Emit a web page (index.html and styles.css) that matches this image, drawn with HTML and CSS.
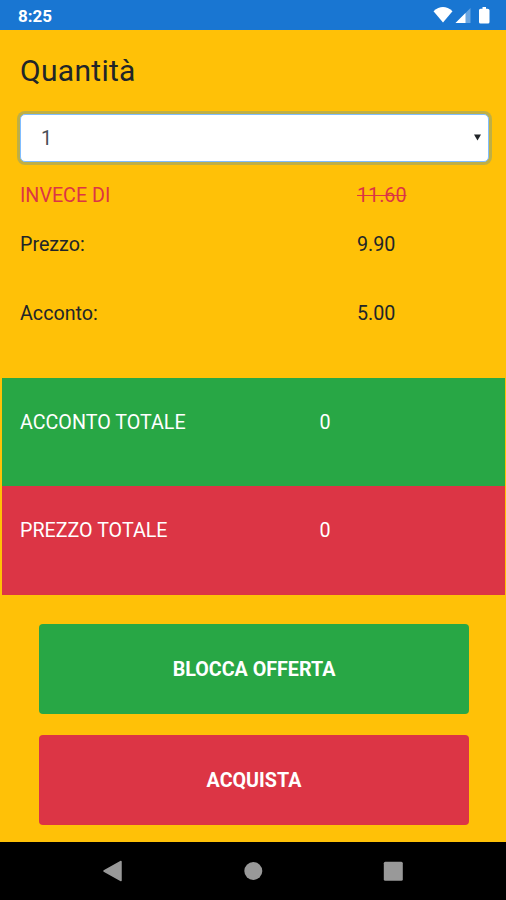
FILE: index.html
```
<!DOCTYPE html>
<html lang="it">
<head>
    <meta charset="UTF-8">
    <meta name="viewport" content="width=device-width, initial-scale=1.0">
    <title>Quantità</title>
    <link rel="stylesheet" href="styles.css">
</head>
<body>
    <header class="status-bar">
        <span class="clock">8:25</span>
        <svg class="status-icons" width="58" height="20" viewBox="0 0 58 20">
            <path d="M0.500 4.200Q10 -4 19.500 4.200L10 15.500Z" fill="#fff"/>
            <path d="M37.500 1V16H22.500Z" fill="#fff" fill-opacity="0.35"/>
            <path d="M32.500 6V16H22.500Z" fill="#fff"/>
            <path d="M48.500 1.800H49.500V0H53V1.800H54.500Q56.500 1.800 56.500 3.300V15Q56.500 16.500 55 16.500H47.500Q46 16.500 46 15V3.300Q46 1.800 47.500 1.800Z" fill="#fff"/>
        </svg>
    </header>

    <main>
        <form class="quantity">
            <h1><label for="qty">Quantità</label></h1>
            <div class="select-box">
                <select id="qty">
                    <option>1</option>
                    <option>2</option>
                    <option>3</option>
                </select>
                <svg class="arrow" width="7" height="7" viewBox="0 0 7 7">
                    <path d="M0 0.500H7L3.500 6.500Z" fill="#212529"/>
                </svg>
            </div>
        </form>

        <div class="prices">
            <div class="row old-price">
                <span>INVECE DI</span>
                <s>11.60</s>
            </div>
            <div class="row price">
                <span>Prezzo:</span>
                <span>9.90</span>
            </div>
            <div class="row deposit">
                <span>Acconto:</span>
                <span>5.00</span>
            </div>
        </div>

        <div class="totals">
            <div class="total green">
                <span>ACCONTO TOTALE</span>
                <span>0</span>
            </div>
            <div class="total red">
                <span>PREZZO TOTALE</span>
                <span>0</span>
            </div>
        </div>

        <div class="actions">
            <button type="button" class="green">BLOCCA OFFERTA</button>
            <button type="button" class="red">ACQUISTA</button>
        </div>
    </main>

    <nav class="nav-bar">
        <svg width="20" height="22" viewBox="0 0 20 22">
            <path d="M1 11L18 1.500V20.500Z" fill="#999" stroke="#999" stroke-width="1.500" stroke-linejoin="round"/>
        </svg>
        <svg width="20" height="22" viewBox="0 0 20 22">
            <circle cx="10.300" cy="11" r="9" fill="#999"/>
        </svg>
        <svg width="20" height="22" viewBox="0 0 20 22">
            <rect x="0.800" y="1.700" width="19" height="19" rx="1.500" fill="#999"/>
        </svg>
    </nav>
</body>
</html>
```
FILE: styles.css
```
* {
    box-sizing: border-box;
}
body {
    margin: 0;
    height: 900px;
    display: flex;
    flex-direction: column;
    background-color: #ffc107;
    color: #212529;
    font-family: Roboto, sans-serif;
    font-size: 19.7px;
    line-height: 30px;
}
.status-bar {
    display: flex;
    justify-content: space-between;
    height: 29.5px;
    padding: 0 15px 0 18px;
    background-color: #1976d2;
    color: white;
}
.clock {
    font-size: 17px;
    font-weight: 700;
    line-height: 32px;
}
.status-icons {
    margin-top: 7px;
}
main {
    flex: 1;
}
.quantity {
    padding: 23.5px 17.5px 0 20px;
}
h1 {
    margin: 0 0 25px;
    font-size: 30px;
    font-weight: 400;
    letter-spacing: 0.3px;
    line-height: 36px;
}
.select-box {
    display: grid;
    align-items: center;
}
select, .arrow {
    grid-area: 1 / 1;
}
select {
    width: 100%;
    height: 47.5px;
    padding: 2px 20px 0;
    appearance: none;
    border: 1px solid #80bdff;
    border-radius: 5px;
    outline: none;
    background-color: white;
    box-shadow: 0 0 0 3px rgba(0, 123, 255, 0.25);
    color: #495057;
    font-family: inherit;
    font-size: 19.7px;
}
.arrow {
    justify-self: end;
    margin-right: 8px;
}
.row {
    display: grid;
    grid-template-columns: 337px 1fr;
    padding: 0 20px;
}
.prices {
    padding-top: 19.5px;
    height: 216.5px;
}
.old-price {
    color: #dc3545;
}
.price {
    margin-top: 19px;
}
.deposit {
    margin-top: 39px;
}
.totals {
    margin: 0 1px 0 2px;
}
.total {
    display: grid;
    grid-template-columns: 299.5px 1fr;
    height: 108.3px;
    padding: 29.5px 18px;
    color: white;
}
.green {
    background-color: #28a745;
}
.red {
    background-color: #dc3545;
}
.actions {
    display: flex;
    flex-direction: column;
    gap: 21px;
    padding: 29.6px 37px 0 39px;
}
button {
    height: 90px;
    padding: 0;
    border: none;
    border-radius: 4px;
    color: white;
    font-family: inherit;
    font-size: 19.7px;
    font-weight: 700;
    cursor: pointer;
}
.nav-bar {
    display: flex;
    justify-content: space-between;
    align-items: center;
    height: 58.5px;
    padding: 0 103px;
    background-color: black;
}
```
